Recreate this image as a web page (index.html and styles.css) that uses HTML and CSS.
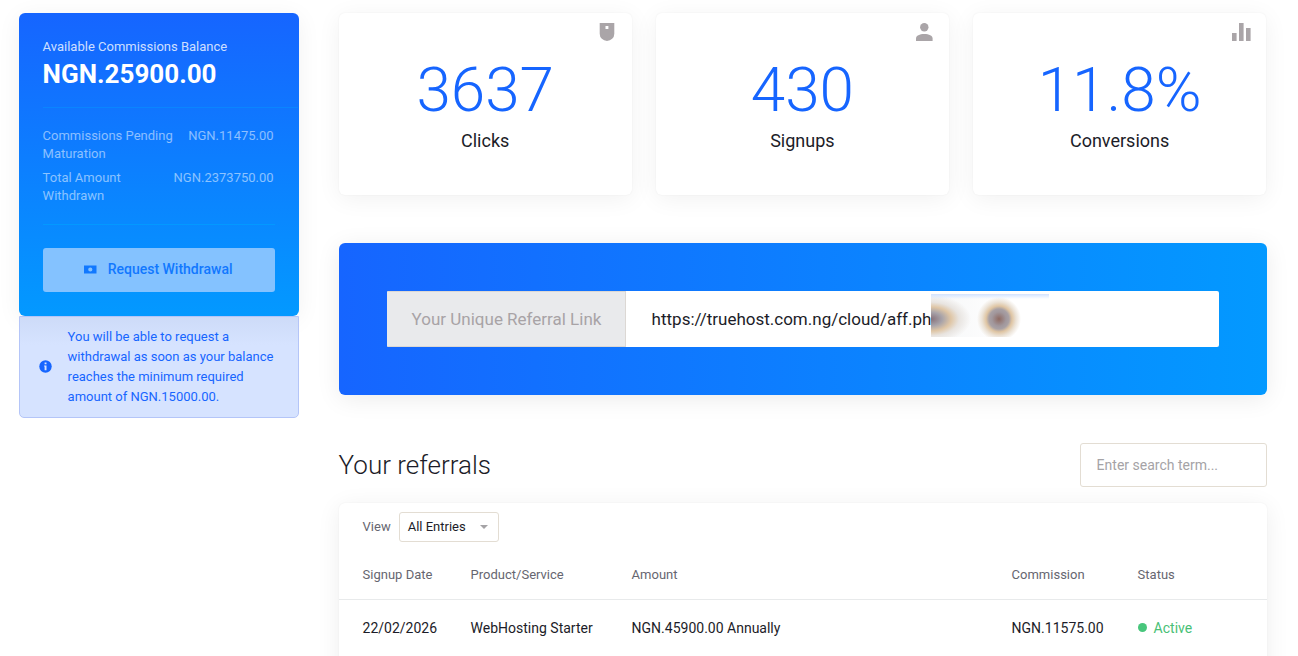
FILE: index.html
```html
<!DOCTYPE html>
<html lang="en">
<head>
  <meta charset="UTF-8">
  <title>Affiliates</title>
  <link rel="stylesheet" href="styles.css">
</head>
<body>
  <div class="page">
    <aside class="sidebar">
      <div class="balance">
        <div class="balance-label">Available Commissions Balance</div>
        <div class="balance-amount">NGN.25900.00</div>
        <div class="balance-divider"></div>
        <div class="balance-list">
          <div class="balance-row">
            <span>Commissions Pending Maturation</span>
            <span>NGN.11475.00</span>
          </div>
          <div class="balance-row">
            <span>Total Amount Withdrawn</span>
            <span>NGN.2373750.00</span>
          </div>
        </div>
        <button class="btn-withdraw" disabled>
          <svg width="13" height="9" viewBox="0 0 13 9"><path fill="currentColor" fill-rule="evenodd" d="M0 .5h12.500v8H0zM6.300 2.400a2.100 2.100 0 1 0 0 4.200 2.100 2.100 0 0 0 0-4.200z"/></svg>
          Request Withdrawal
        </button>
      </div>
      <div class="note">
        <svg width="13" height="13" viewBox="0 0 13 13"><circle cx="6.5" cy="6.5" r="6.2" fill="#1665ff"/><path fill="#d6e3ff" d="M5.6 2.6h1.9v1.7H5.6zM5.1 5.4h2.4v4.8H5.6V6.6h-.5z"/></svg>
        <p>You will be able to request a withdrawal as soon as your balance reaches the minimum required amount of NGN.15000.00.</p>
      </div>
    </aside>

    <main class="main">
      <div class="stats">
        <div class="stat">
          <svg class="stat-icon" width="24" height="24" viewBox="0 0 24 24"><path fill="#aaa5a8" fill-rule="evenodd" d="M4.700 3h14.600v10.700a7.300 7.300 0 0 1-14.600 0zM10.500 6v3h2.900V6z"/></svg>
          <div class="stat-value">3637</div>
          <div class="stat-label">Clicks</div>
        </div>
        <div class="stat">
          <svg class="stat-icon" width="24" height="24" viewBox="0 0 24 24"><circle cx="12.300" cy="7.200" r="4.200" fill="#aaa5a8"/><path fill="#aaa5a8" d="M4 21v-2.600c0-2.600 3.600-4.400 8.300-4.400s8.300 1.800 8.300 4.400V21z"/></svg>
          <div class="stat-value">430</div>
          <div class="stat-label">Signups</div>
        </div>
        <div class="stat">
          <svg class="stat-icon" width="24" height="24" viewBox="0 0 24 24"><path fill="#aaa5a8" d="M3 13h4.600v8H3zM10 3h4.600v18H10zM17 8h4.600v13H17z"/></svg>
          <div class="stat-value">11.8%</div>
          <div class="stat-label">Conversions</div>
        </div>
      </div>

      <div class="banner">
        <div class="link-group">
          <div class="link-label">Your Unique Referral Link</div>
          <div class="link-value">https://truehost.com.ng/cloud/aff.ph<span class="redacted"></span></div>
        </div>
      </div>

      <div class="section-head">
        <h2>Your referrals</h2>
        <input class="search" type="text" placeholder="Enter search term...">
      </div>

      <div class="table-card">
        <div class="filter">
          <span>View</span>
          <div class="select">All Entries <span class="caret"></span></div>
        </div>
        <table>
          <thead>
            <tr>
              <th class="col-date">Signup Date</th>
              <th class="col-product">Product/Service</th>
              <th class="col-amount">Amount</th>
              <th class="col-commission">Commission</th>
              <th>Status</th>
            </tr>
          </thead>
          <tbody>
            <tr>
              <td class="col-date">22/02/2026</td>
              <td>WebHosting Starter</td>
              <td>NGN.45900.00 Annually</td>
              <td>NGN.11575.00</td>
              <td><span class="status">Active</span></td>
            </tr>
          </tbody>
        </table>
      </div>
    </main>
  </div>
</body>
</html>
```
FILE: styles.css
```css
* {
  box-sizing: border-box;
}

body {
  margin: 0;
  height: 656px;
  overflow: hidden;
  font-family: Roboto, "Liberation Sans", sans-serif;
  font-size: 14px;
  color: #1c1c28;
  background: #fff;
}

.page {
  display: flex;
  align-items: flex-start;
  gap: 40px;
  height: 656px;
  overflow: hidden;
  padding: 13px 31.4px 0 18.6px;
}

.sidebar {
  width: 280px;
  flex-shrink: 0;
}

.balance {
  height: 303px;
  padding: 24px;
  border-radius: 6px;
  background: linear-gradient(180deg, #1665ff, #0399ff);
  box-shadow: 0 4px 24px rgba(0, 0, 0, 0.06);
}

.balance-label {
  font-size: 13px;
  line-height: 20px;
  color: rgba(255, 255, 255, 0.8);
}

.balance-amount {
  font-size: 26px;
  font-weight: 700;
  line-height: 34px;
  color: #fff;
}

.balance-divider {
  height: 1px;
  margin: 16px -23px 0 0;
  background: #0a85ff;
}

.balance-list {
  padding: 19px 0;
  border-bottom: 1px solid #0399ff;
  height: 117px;
}

.balance-row {
  display: flex;
  justify-content: space-between;
  gap: 12px;
  padding-right: 1px;
  margin-bottom: 6px;
  font-size: 13px;
  line-height: 18px;
  color: rgba(255, 255, 255, 0.53);
}

.btn-withdraw {
  display: flex;
  align-items: center;
  justify-content: center;
  gap: 11px;
  width: 100%;
  height: 44px;
  margin-top: 23px;
  padding: 0 1px 2px 0;
  border: none;
  border-radius: 3px;
  background: #84c2ff;
  color: #1178ff;
  font-family: inherit;
  font-size: 14px;
  font-weight: 500;
}

.note {
  display: flex;
  align-items: center;
  gap: 16px;
  height: 102px;
  padding: 0 20px 0 19px;
  border: 1px solid #b4c5f8;
  border-radius: 0 0 5px 5px;
  background: linear-gradient(180deg, #cddbf8, #d6e3ff 28px);
  color: #1665ff;
  font-size: 13px;
  line-height: 20px;
}

.note svg {
  flex-shrink: 0;
  margin-bottom: 1px;
}

.note p {
  margin: 0;
}

.main {
  flex: 1;
}

.stats {
  display: grid;
  grid-template-columns: repeat(3, 1fr);
  gap: 24px;
  padding-right: 0.4px;
}

.stat {
  position: relative;
  height: 182px;
  padding-top: 40px;
  border-radius: 6px;
  background: #fff;
  box-shadow: 0 0 2px rgba(0, 0, 0, 0.06), 0 4px 24px rgba(0, 0, 0, 0.06);
  text-align: center;
}

.stat-icon {
  position: absolute;
  top: 7px;
  right: 13px;
}

.stat-value {
  font-size: 62px;
  font-weight: 300;
  line-height: 74px;
  color: #1665ff;
}

.stat-label {
  font-size: 18px;
  line-height: 28px;
}

.banner {
  margin-top: 48px;
  padding: 48px;
  border-radius: 6px;
  background: linear-gradient(90deg, #1665ff, #0399ff);
  box-shadow: 0 4px 24px rgba(0, 0, 0, 0.08);
}

.link-group {
  display: flex;
  height: 56px;
  border-radius: 2px;
  overflow: hidden;
  background: #fff;
  line-height: 56px;
  font-size: 17px;
}

.link-label {
  width: 239px;
  padding-left: 24px;
  border: 1px solid #dcd8d4;
  border-left-color: #e9eaec;
  background: #e9eaec;
  color: #a8a3a6;
  line-height: 54px;
}

.link-value {
  position: relative;
  padding-left: 26px;
}

/* hides the affiliate id */
.redacted {
  position: absolute;
  left: 305px;
  top: 3px;
  width: 118px;
  height: 43px;
  background:
    linear-gradient(180deg, #d3e3ff, rgba(255, 255, 255, 0) 5px),
    radial-gradient(circle at 68px 25px, #8f6a62 0, #a1979c 7px, #a8a0a4 10px, #dfc5a3 13px, #ebe2d6 17px, rgba(255, 255, 255, 0) 22px),
    radial-gradient(ellipse 40px 24px at 0 25px, #86707a 0, #a8a3a9 28%, #dfc6a6 50%, #e8e4e0 70%, rgba(255, 255, 255, 0) 100%),
    linear-gradient(90deg, #f6f7f8, #fff 80px);
}

.section-head {
  display: flex;
  justify-content: space-between;
  align-items: center;
  height: 44px;
  margin-top: 48px;
}

h2 {
  margin: 0;
  font-size: 26px;
  font-weight: 300;
}

.search {
  width: 187px;
  height: 44px;
  padding: 0 15px 0 16px;
  border: 1px solid #e3ddd3;
  border-radius: 3px;
  background: #fff;
  font-family: inherit;
  font-size: 14px;
}

.search::placeholder {
  color: #a5a3a6;
}

.table-card {
  height: 240px;
  margin-top: 16px;
  padding-top: 9px;
  border-radius: 6px;
  background: #fff;
  box-shadow: 0 0 2px rgba(0, 0, 0, 0.06), 0 4px 24px rgba(0, 0, 0, 0.07);
}

.filter {
  display: flex;
  align-items: center;
  gap: 8px;
  padding-left: 24px;
  font-size: 13px;
  line-height: 28px;
  color: #666670;
}

.select {
  display: flex;
  align-items: center;
  justify-content: space-between;
  width: 100px;
  height: 30px;
  padding: 0 10px 1px 8px;
  border: 1px solid #e3ddd3;
  border-radius: 3px;
  color: #1c1c28;
}

.caret {
  border: 4px solid transparent;
  border-top-color: #a5a3a6;
  border-bottom: 0;
}

table {
  width: 100%;
  margin-top: 8px;
  border-collapse: collapse;
  table-layout: fixed;
}

th {
  height: 49px;
  padding: 1px 0 0;
  border-bottom: 1px solid #e8eaeb;
  color: #666670;
  font-size: 13px;
  font-weight: 400;
  text-align: left;
}

td {
  height: 57px;
  padding: 0;
  font-size: 14px;
}

.col-date {
  width: 132px;
  padding-left: 24px;
}

.col-product {
  width: 161px;
}

.col-amount {
  width: 380px;
}

.col-commission {
  width: 126px;
}

.status {
  display: flex;
  align-items: center;
  gap: 7px;
  color: #48bf76;
}

.status::before {
  content: "";
  width: 9px;
  height: 9px;
  border-radius: 50%;
  background: #48c67c;
}
```
